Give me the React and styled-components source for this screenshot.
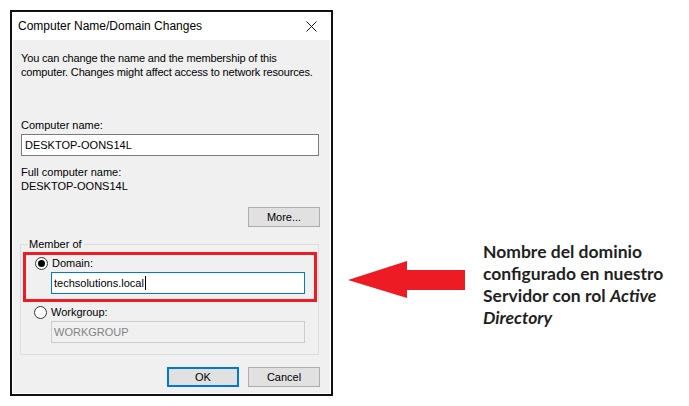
import React from 'react';
import styled, { createGlobalStyle } from 'styled-components';

const GlobalStyle = createGlobalStyle`
  html, body {
    margin: 0;
    padding: 0;
    background: #fff;
  }
  body {
    font-family: "Liberation Sans", Arial, sans-serif;
  }
`;

const App = () => (
  <Page>
    <GlobalStyle />
    <Dialog>
      <TitleBar>
        <Title>Computer Name/Domain Changes</Title>
        <CloseIcon width="11" height="11" viewBox="0 0 11 11">
          <path d="M0.5 0.5 L10.5 10.5 M10.5 0.5 L0.5 10.5" stroke="#111" strokeWidth="1" />
        </CloseIcon>
      </TitleBar>
      <Client>
        <Intro>
          You can change the name and the membership of this
          <br />
          computer. Changes might affect access to network resources.
        </Intro>
        <Label top={39}>Computer name:</Label>
        <TextBox>DESKTOP-OONS14L</TextBox>
        <Label top={9}>Full computer name:</Label>
        <Label>DESKTOP-OONS14L</Label>
        <ButtonRow top={14}>
          <Button>More...</Button>
        </ButtonRow>
        <Group>
          <Legend>Member of</Legend>
          <Highlight>
            <RadioRow>
              <Radio checked />
              <span>Domain:</span>
            </RadioRow>
            <TextBox focused indent={25}>
              techsolutions.local
              <Caret />
            </TextBox>
          </Highlight>
          <RadioRow top={3} pad={11}>
            <Radio />
            <span>Workgroup:</span>
          </RadioRow>
          <TextBox disabled indent={28}>
            WORKGROUP
          </TextBox>
        </Group>
        <ButtonRow top={12}>
          <Button primary>OK</Button>
          <Button>Cancel</Button>
        </ButtonRow>
      </Client>
    </Dialog>
    <Annotation>
      <Arrow width="117" height="37" viewBox="0 0 117 37">
        <polygon points="0,19 59,0 59,9 117,9 117,29 59,29 59,37" fill="#ed1c24" />
      </Arrow>
      <Note>
        Nombre del dominio
        <br />
        configurado en nuestro
        <br />
        Servidor con rol <em>Active</em>
        <br />
        <em>Directory</em>
      </Note>
    </Annotation>
  </Page>
);

/* styled-components */
const Page = styled.div`
  display: flex;
  align-items: flex-start;
  padding: 10px 0 0 10px;
`;

const Dialog = styled.div`
  width: 323px;
  height: 386px;
  box-sizing: border-box;
  border: 2px solid #111;
  background: #fff;
  display: flex;
  flex-direction: column;
  overflow: hidden;
`;

const TitleBar = styled.div`
  flex-shrink: 0;
  height: 28px;
  display: flex;
  align-items: center;
  justify-content: space-between;
  padding: 0 14px 0 6px;
`;

const Title = styled.div`
  font-size: 12px;
  color: #000;
`;

const CloseIcon = styled.svg`
  display: block;
`;

const Client = styled.div`
  flex: 1;
  margin: 0 1px 1px;
  background: #f0f0f0;
  padding: 0 11px 0 8px;
  font-size: 11px;
  line-height: 14px;
  color: #000;
  white-space: nowrap;
`;

const Intro = styled.div`
  margin-top: 11px;
  letter-spacing: -0.15px;
`;

const Label = styled.div`
  margin-top: ${(p) => p.top || 0}px;
`;

const TextBox = styled.div`
  margin-top: 2px;
  margin-left: ${(p) => p.indent || 0}px;
  width: ${(p) => (p.indent ? '254px' : 'auto')};
  height: 22px;
  box-sizing: border-box;
  display: flex;
  align-items: center;
  padding-left: ${(p) => (p.indent ? 2 : 3)}px;
  border: 1px solid ${(p) => (p.focused ? '#0078d7' : p.disabled ? '#cccccc' : '#7a7a7a')};
  background: ${(p) => (p.disabled ? '#f0f0f0' : '#fff')};
  color: ${(p) => (p.disabled ? '#838383' : '#000')};
`;

const Caret = styled.span`
  display: inline-block;
  width: 1px;
  height: 14px;
  margin-left: 1px;
  background: #000;
`;

const ButtonRow = styled.div`
  display: flex;
  justify-content: flex-end;
  gap: 9px;
  margin-top: ${(p) => p.top || 0}px;
  margin-right: -1px;
`;

const Button = styled.div`
  width: 72px;
  height: 20px;
  box-sizing: border-box;
  display: flex;
  align-items: center;
  justify-content: center;
  background: #e1e1e1;
  border: ${(p) => (p.primary ? '2px solid #0078d7' : '1px solid #adadad')};
`;

const Group = styled.fieldset`
  margin: 10px 0 0 -1px;
  padding: 1px 1px 11px 2px;
  border: 1px solid #dcdcdc;
  min-width: 0;
`;

const Legend = styled.legend`
  margin-left: 4px;
  padding: 0 2px;
  font-size: 11px;
  line-height: 14px;
`;

const Highlight = styled.div`
  border: 3px solid #ed1c24;
  padding: 1px 0 5px 0;
`;

const RadioRow = styled.div`
  display: flex;
  align-items: center;
  gap: 4px;
  height: 14px;
  margin-top: ${(p) => p.top || 0}px;
  padding-left: ${(p) => p.pad || 9}px;
`;

const Radio = styled.span`
  width: 13px;
  height: 13px;
  box-sizing: border-box;
  border-radius: 50%;
  border: 1px solid #333;
  background: #fff;
  display: flex;
  align-items: center;
  justify-content: center;

  &::after {
    content: '';
    width: 7px;
    height: 7px;
    border-radius: 50%;
    background: ${(p) => (p.checked ? '#000' : 'transparent')};
  }
`;

const Annotation = styled.div`
  display: flex;
  align-items: flex-start;
  margin-top: 231px;
`;

const Arrow = styled.svg`
  display: block;
  margin: 20px 0 0 15px;
`;

const Note = styled.div`
  margin-left: 18px;
  font-family: Lato, "Liberation Sans", sans-serif;
  font-weight: 700;
  font-size: 17.5px;
  line-height: 22px;
  color: #1f1f1f;

  em {
    font-style: italic;
  }
`;

export default App;
